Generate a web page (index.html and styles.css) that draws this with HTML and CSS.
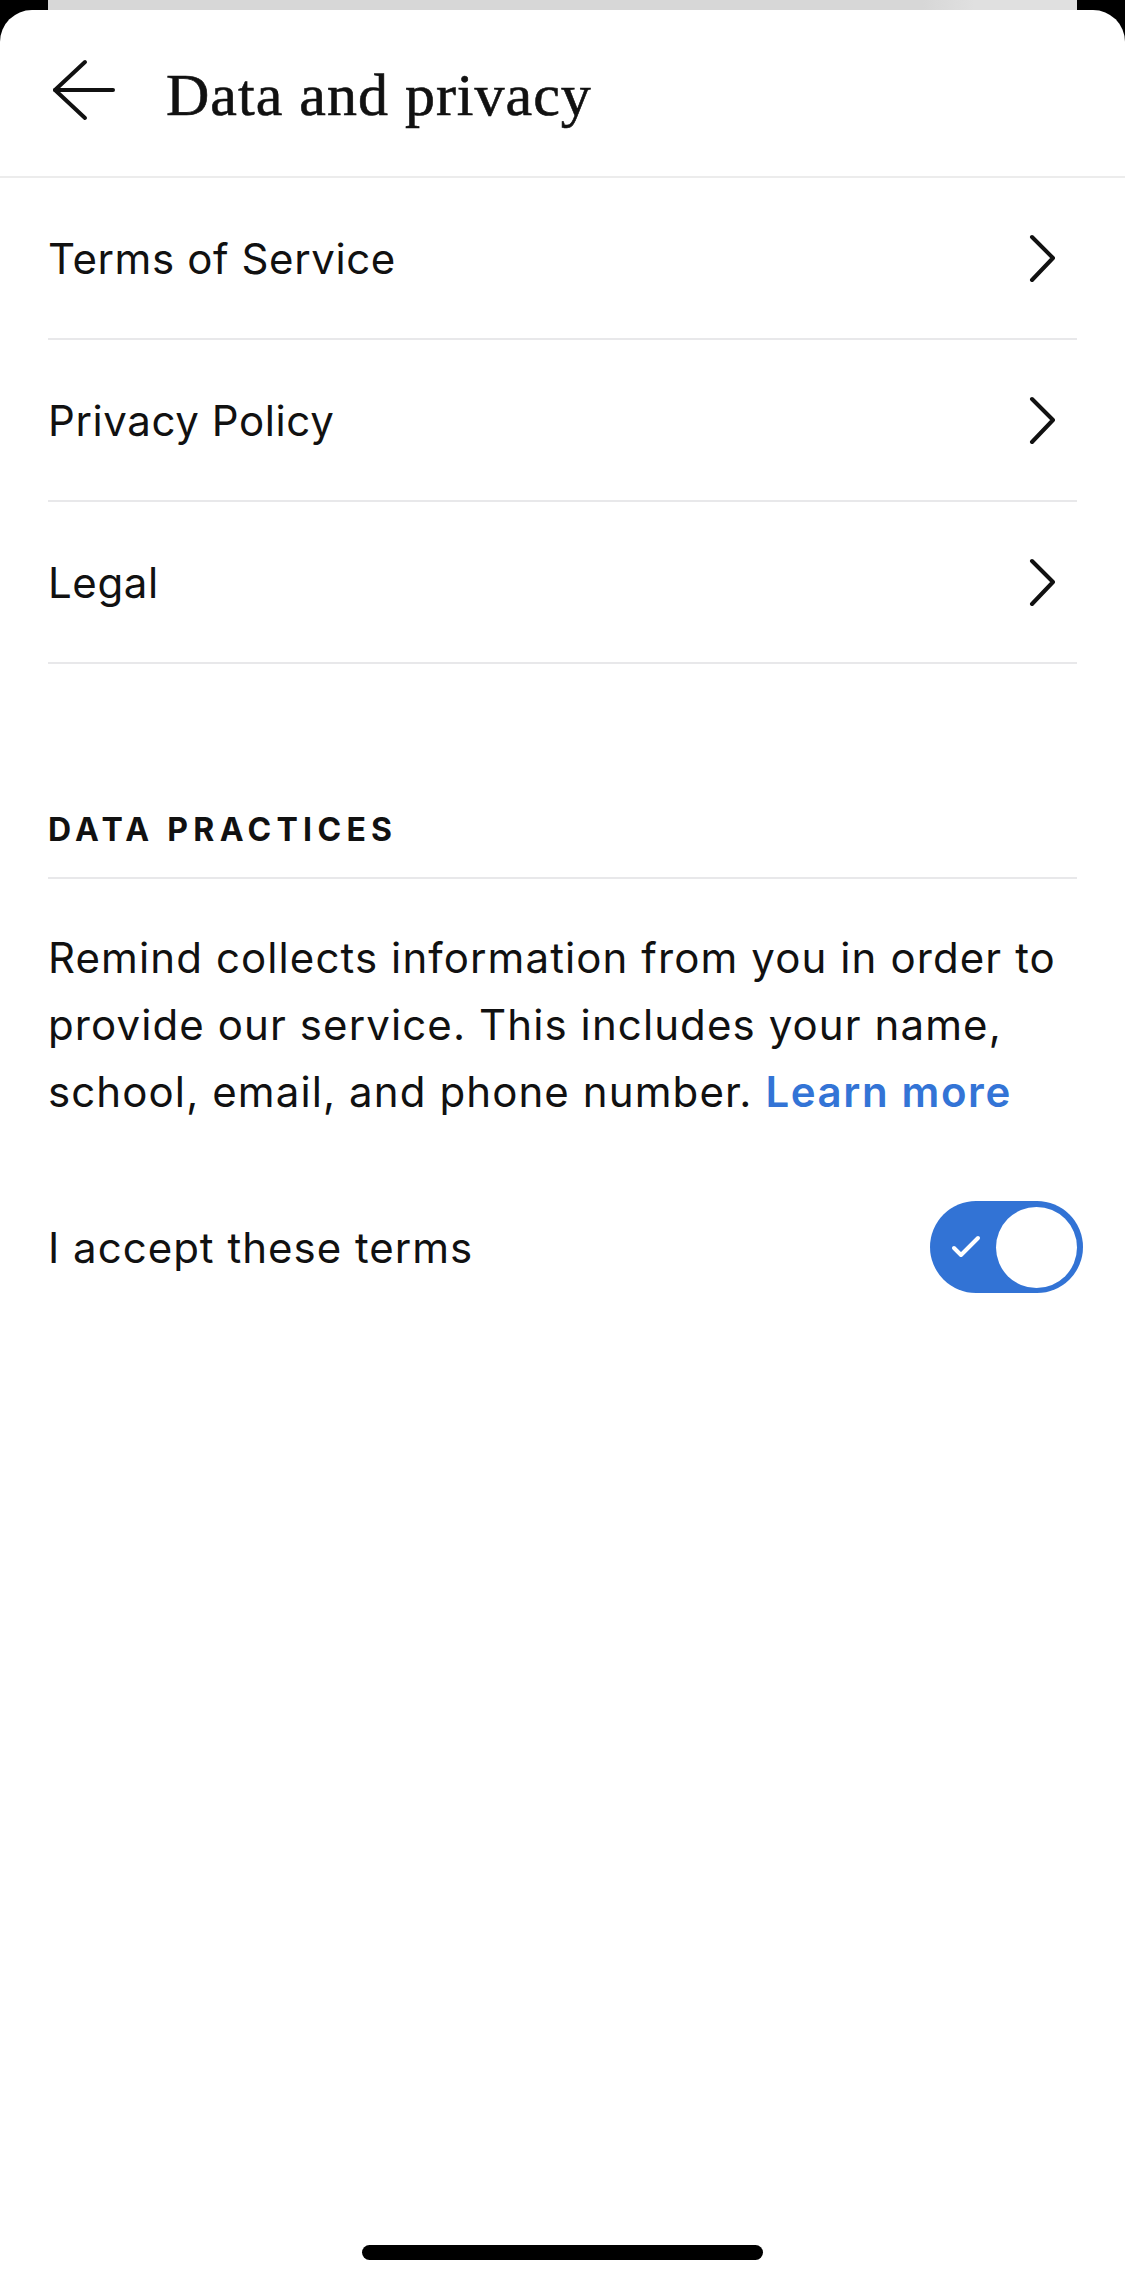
FILE: index.html
```html
<!DOCTYPE html>
<html lang="en">
<head>
    <meta charset="UTF-8">
    <meta name="viewport" content="width=device-width, initial-scale=1.0">
    <title>Data and privacy</title>
    <link rel="stylesheet" href="styles.css">
</head>
<body>

<!-- карточка под текущим экраном -->
<div class="stack"></div>

<div class="sheet">
    <header class="topbar">
        <button class="back" aria-label="Back">
            <svg width="64" height="64" viewBox="0 0 64 64" fill="none" stroke="#111" stroke-width="4" stroke-linecap="round" stroke-linejoin="round">
                <path d="M33 4 L3 32 L33 60"/>
                <path d="M3 32 H61"/>
            </svg>
        </button>
        <h1 class="title">Data and privacy</h1>
    </header>

    <ul class="menu">
        <li class="menu-item">
            <span>Terms of Service</span>
            <svg class="chevron" width="28" height="48" viewBox="0 0 28 48" fill="none" stroke="#111" stroke-width="4" stroke-linecap="round" stroke-linejoin="round"><path d="M4 3 L25 24 L4 46"/></svg>
        </li>
        <li class="menu-item">
            <span>Privacy Policy</span>
            <svg class="chevron" width="28" height="48" viewBox="0 0 28 48" fill="none" stroke="#111" stroke-width="4" stroke-linecap="round" stroke-linejoin="round"><path d="M4 3 L25 24 L4 46"/></svg>
        </li>
        <li class="menu-item">
            <span>Legal</span>
            <svg class="chevron" width="28" height="48" viewBox="0 0 28 48" fill="none" stroke="#111" stroke-width="4" stroke-linecap="round" stroke-linejoin="round"><path d="M4 3 L25 24 L4 46"/></svg>
        </li>
    </ul>

    <section class="practices">
        <h2 class="section-title">DATA PRACTICES</h2>
        <p class="notice">Remind collects information from you in order to provide our service. This includes your name, school, email, and phone number. <a href="#" class="learn">Learn more</a></p>

        <div class="accept">
            <span>I accept these terms</span>
            <div class="toggle">
                <svg width="30" height="24" viewBox="0 0 30 24" fill="none" stroke="#fff" stroke-width="4" stroke-linecap="round" stroke-linejoin="round"><path d="M3 13 L10 20 L27 3"/></svg>
                <span class="knob"></span>
            </div>
        </div>
    </section>

    <div class="home-bar"></div>
</div>

</body>
</html>
```

FILE: styles.css
```css
body {
    margin: 0;
    padding: 0;
    background: #000;
    font-family: Inter, "Open Sans", sans-serif;
    color: #111;
}

.stack {
    height: 10px;
    margin: 0 48px;
    background: linear-gradient(to right, #d7d7d7 0%, #d7d7d7 85%, #e0e0e0 90%, #e0e0e0 100%);
}

.sheet {
    background: #fff;
    border-radius: 32px 32px 0 0;
    min-height: 2274px;
    box-sizing: border-box;
    display: flex;
    flex-direction: column;
}

.topbar {
    height: 168px;
    box-sizing: border-box;
    border-bottom: 2px solid #ececec;
    display: flex;
    align-items: center;
    padding-left: 52px;
}

.back {
    background: none;
    border: none;
    padding: 0;
    width: 64px;
    height: 64px;
    margin-bottom: 7px;
    cursor: pointer;
}

.back svg {
    display: block;
}

.title {
    margin: 4px 0 0 50px;
    font-family: "Liberation Serif", serif;
    font-weight: normal;
    font-size: 60px;
    line-height: 60px;
    letter-spacing: 1px;
    color: #111;
    -webkit-text-stroke: 0.6px #111;
}

.menu {
    list-style: none;
    margin: 0 48px;
    padding: 0;
}

.menu-item {
    height: 162px;
    box-sizing: border-box;
    border-bottom: 2px solid #e8e8ea;
    display: flex;
    align-items: center;
    justify-content: space-between;
    font-size: 42px;
    letter-spacing: 0.6px;
}

.chevron {
    margin-right: 21px;
}

.practices {
    margin: 0 48px;
}

.section-title {
    margin: 146px 0 0;
    padding-bottom: 27px;
    border-bottom: 2px solid #e8e8ea;
    font-size: 32px;
    line-height: 40px;
    font-weight: 700;
    letter-spacing: 5.3px;
}

.notice {
    margin: 45px 0 0;
    font-size: 42px;
    line-height: 67px;
    letter-spacing: 1.1px;
}

.learn {
    color: #3374d6;
    font-weight: 600;
    letter-spacing: 1.6px;
    text-decoration: none;
}

.accept {
    margin-top: 76px;
    display: flex;
    align-items: center;
    justify-content: space-between;
    font-size: 42px;
    letter-spacing: 1px;
}

.toggle {
    width: 153px;
    height: 92px;
    box-sizing: border-box;
    margin-right: -6px;
    border-radius: 46px;
    background: #3273d5;
    display: flex;
    align-items: center;
    justify-content: space-between;
    padding: 0 6px 0 21px;
}

.toggle svg {
    display: block;
}

.knob {
    width: 81px;
    height: 81px;
    border-radius: 50%;
    background: #fff;
}

.home-bar {
    width: 401px;
    height: 15px;
    border-radius: 8px;
    background: #000;
    margin: auto auto 24px;
}
```
